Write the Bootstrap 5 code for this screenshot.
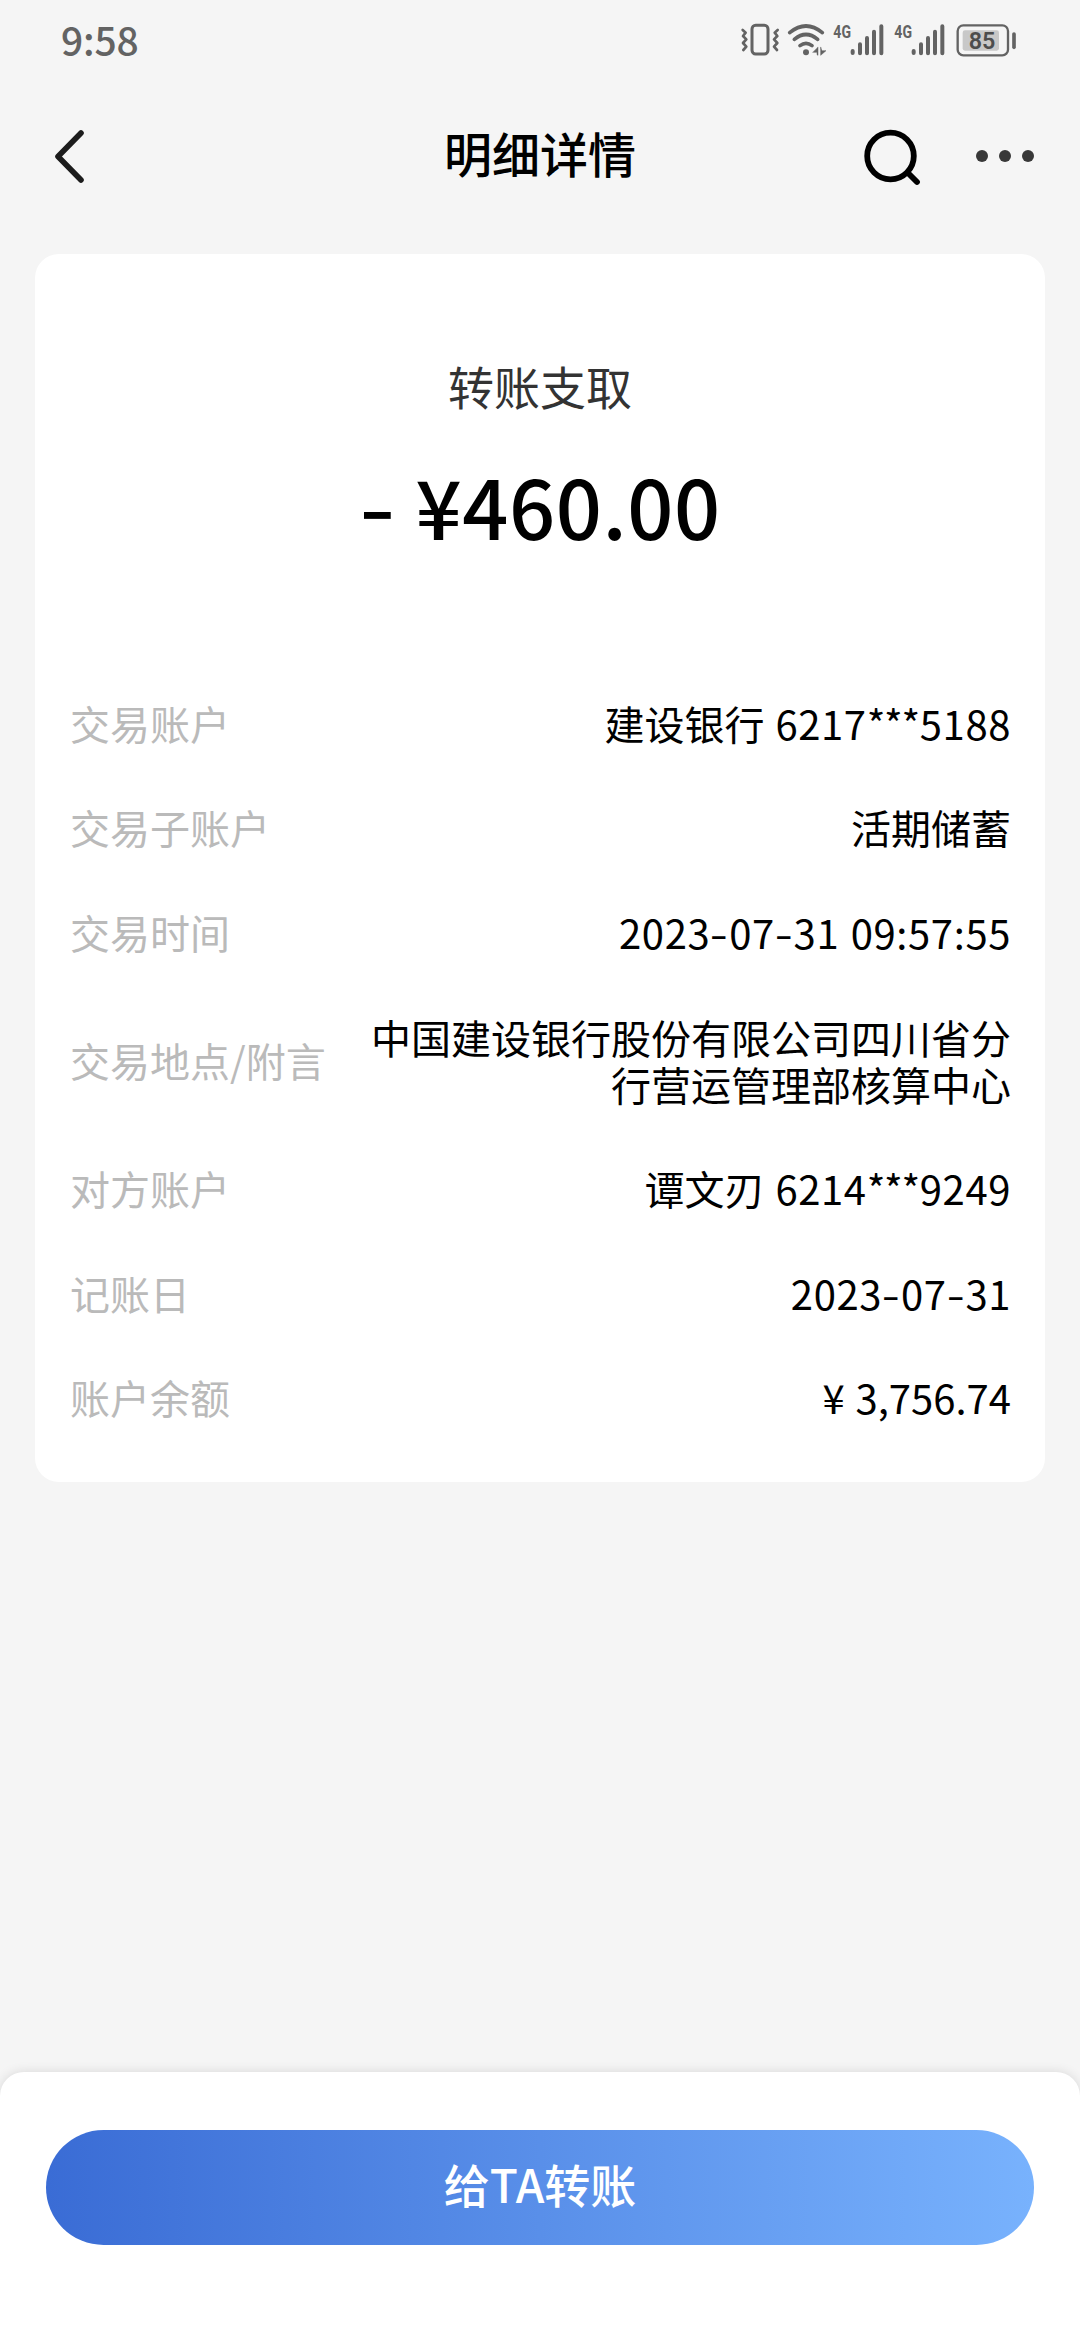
<!DOCTYPE html>
<html lang="zh-CN">
<head>
<meta charset="utf-8">
<meta name="viewport" content="width=device-width, initial-scale=1">
<title>明细详情</title>
<link href="https://cdn.jsdelivr.net/npm/bootstrap@5.3.0/dist/css/bootstrap.min.css" rel="stylesheet">
<style>
  body { background: #f5f5f5; font-family: "Noto Sans CJK SC", sans-serif; color: #000; min-height: 2340px; }
  .status-bar { height: 80px; padding-left: 61px; color: #636363; }
  .clock { font-size: 39px; line-height: 79px; font-weight: 500; letter-spacing: -.2px; }
  .title-bar { height: 174px; padding: 0 40px 22px; }
  .title-side { flex: 1 1 0; }
  .back-icon { margin-left: 8px; }
  .page-title { font-size: 48px; line-height: 60px; font-weight: 500; padding-bottom: 8px; }
  .detail-card { margin: 0 35px; height: 1228px; border-radius: 24px; padding: 101px 35px 0; }
  .kind { font-size: 46px; line-height: 60px; color: #333; }
  .amount { font-size: 81px; line-height: 100px; font-weight: 500; margin-top: 40px; letter-spacing: .6px; }
  .detail-list { margin-top: 116px; }
  .detail-row { padding: 28.8px 0; font-size: 40px; line-height: 47px; }
  .detail-row dt { color: #bababa; font-weight: 400; white-space: nowrap; }
  .detail-row dd { font-weight: 400; max-width: 644px; margin-right: -1px; word-spacing: 2px; }
  .detail-row .num { letter-spacing: .6px; }
  .stars { letter-spacing: -1.3px; margin-right: 1px; }
  .dash { display: inline-block; transform: scaleX(1.3); margin: 0 2.2px; }
  .amount .dash { margin: 0 4px 0 4px; transform: scaleX(1.25) translateY(-2px); }
  .bottom-sheet { height: 268px; border-radius: 24px 24px 0 0; padding: 58px 46px 0; box-shadow: 0 0 12px rgba(0,0,0,.12); }
  .btn-transfer, .btn-transfer:hover { height: 115px; font-size: 46px; line-height: 60px; font-weight: 500; border: 0; color: #fff;
    padding: 0 0 10px; background: linear-gradient(90deg, #3a6cd5 0%, #78b2fd 100%); }
</style>
</head>
<body class="d-flex flex-column">
<header>
  <div class="status-bar d-flex justify-content-between">
    <span class="clock">9:58</span>
    <svg width="360" height="80" viewBox="0 0 1080 240" fill="none" stroke="#636363" stroke-linecap="round" stroke-linejoin="round" font-family="Roboto, sans-serif">
      <rect x="96" y="76" width="48" height="86" rx="11" stroke-width="9"/>
      <path d="M68 90l9 8-8 10 10 10-10 11 10 11-9 10" stroke-width="8"/>
      <path d="M173 90l-9 8 8 10-10 10 10 11-10 11 9 10" stroke-width="8"/>
      <path d="M209 98Q258 58 307 98M223 118Q258 89 293 118M240 137Q258 123 276 137" stroke-width="11"/>
      <circle cx="258" cy="157" r="9" fill="#636363" stroke="none"/>
      <path d="M294 142v24l-3-2v-7h-12zM302 142v24l16-14h-12z" fill="#636363" stroke="#636363" stroke-width="1.5"/>
      <g id="signal">
        <text x="340" y="114" font-size="54" font-weight="700" fill="#636363" stroke="none" textLength="53" lengthAdjust="spacingAndGlyphs">4G</text>
        <path d="M398 153v6M420 133v27M441 114v46M462 95v65M484 79v81" stroke-width="12"/>
      </g>
      <use href="#signal" x="183"/>
      <rect x="713" y="76" width="151" height="90" rx="17" stroke-width="7"/>
      <rect x="728" y="91" width="109" height="61" rx="7" fill="#c8c8c8" stroke="none"/>
      <text x="746" y="147" font-size="70" font-weight="600" fill="#4d4d4d" stroke="none" textLength="80" lengthAdjust="spacingAndGlyphs">85</text>
      <path d="M882 102v40" stroke-width="11"/>
    </svg>
  </div>
  <nav class="title-bar d-flex align-items-center">
    <div class="title-side d-flex">
      <svg class="back-icon" width="40" height="60" viewBox="0 0 40 60" fill="none" stroke="#1c1c1c" stroke-width="5.6" stroke-linecap="round" stroke-linejoin="round"><path d="M33 7L10 30.500L33 54"/></svg>
    </div>
    <h1 class="page-title m-0">明细详情</h1>
    <div class="title-side d-flex justify-content-end align-items-center">
      <svg width="180" height="64" viewBox="860 126 180 64"><circle cx="890.500" cy="158" r="23.300" fill="none" stroke="#000" stroke-width="5.800"/><path d="M908 175l9 9" stroke="#000" stroke-width="5.800" stroke-linecap="round"/><g fill="#383838"><circle cx="982" cy="158" r="6"/><circle cx="1005" cy="158" r="6"/><circle cx="1028" cy="158" r="6"/></g></svg>
    </div>
  </nav>
</header>
<main class="flex-grow-1">
  <section class="detail-card bg-white">
    <div class="kind text-center">转账支取</div>
    <div class="amount text-center"><span class="dash">-</span> ¥460.00</div>
    <dl class="detail-list mb-0">
      <div class="detail-row d-flex justify-content-between align-items-center"><dt>交易账户</dt><dd class="mb-0 text-end">建设银行 <span class="num">6217<span class="stars">***</span>5188</span></dd></div>
      <div class="detail-row d-flex justify-content-between align-items-center"><dt>交易子账户</dt><dd class="mb-0 text-end">活期储蓄</dd></div>
      <div class="detail-row d-flex justify-content-between align-items-center"><dt>交易时间</dt><dd class="mb-0 text-end num">2023<span class="dash">-</span>07<span class="dash">-</span>31 09:57:55</dd></div>
      <div class="detail-row d-flex justify-content-between align-items-center"><dt>交易地点/附言</dt><dd class="mb-0 text-end">中国建设银行股份有限公司四川省分行营运管理部核算中心</dd></div>
      <div class="detail-row d-flex justify-content-between align-items-center"><dt>对方账户</dt><dd class="mb-0 text-end">谭文刃 <span class="num">6214<span class="stars">***</span>9249</span></dd></div>
      <div class="detail-row d-flex justify-content-between align-items-center"><dt>记账日</dt><dd class="mb-0 text-end num">2023<span class="dash">-</span>07<span class="dash">-</span>31</dd></div>
      <div class="detail-row d-flex justify-content-between align-items-center"><dt>账户余额</dt><dd class="mb-0 text-end">¥ 3,756.74</dd></div>
    </dl>
  </section>
</main>
<footer class="bottom-sheet bg-white">
  <button type="button" class="btn btn-primary btn-transfer rounded-pill w-100">给TA转账</button>
</footer>
<script src="https://cdn.jsdelivr.net/npm/bootstrap@5.3.0/dist/js/bootstrap.bundle.min.js"></script>
</body>
</html>
